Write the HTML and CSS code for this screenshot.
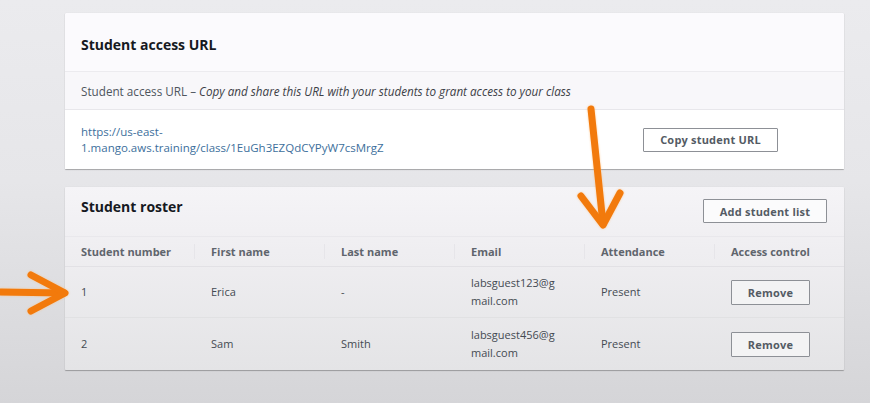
FILE: index.html
```html
<!DOCTYPE html>
<html lang="en">
<head>
<meta charset="utf-8">
<title>Student access</title>
<link rel="stylesheet" href="styles.css">
</head>
<body>
<main class="page">
  <section class="card card-url">
    <header class="card-head">
      <h2 class="card-title">Student access URL</h2>
    </header>
    <p class="desc-row"><span class="desc-label">Student access URL</span> – <em>Copy and share this URL with your students to grant access to your class</em></p>
    <div class="url-row">
      <a class="url-link" href="#">https://us-east-<br>1.mango.aws.training/class/1EuGh3EZQdCYPyW7csMrgZ</a>
      <button class="btn btn-copy">Copy student URL</button>
    </div>
  </section>

  <section class="card card-roster">
    <header class="roster-head">
      <h2 class="card-title roster-title">Student roster</h2>
      <button class="btn btn-add">Add student list</button>
    </header>
    <div class="table">
      <div class="cell th">Student number</div>
      <div class="cell th sep">First name</div>
      <div class="cell th sep">Last name</div>
      <div class="cell th sep">Email</div>
      <div class="cell th sep">Attendance</div>
      <div class="cell th sep">Access control</div>

      <div class="cell td">1</div>
      <div class="cell td">Erica</div>
      <div class="cell td">-</div>
      <div class="cell td email">labsguest123@gmail.com</div>
      <div class="cell td">Present</div>
      <div class="cell td"><button class="btn btn-remove">Remove</button></div>

      <div class="cell td">2</div>
      <div class="cell td">Sam</div>
      <div class="cell td">Smith</div>
      <div class="cell td email">labsguest456@gmail.com</div>
      <div class="cell td">Present</div>
      <div class="cell td"><button class="btn btn-remove">Remove</button></div>
    </div>
  </section>
</main>

<svg class="arrows" width="870" height="403" viewBox="0 0 870 403" aria-hidden="true">
  <g fill="none" stroke="#f27a0c" stroke-width="7" stroke-linecap="round" stroke-linejoin="round">
    <path d="M591 109 L603 224"/>
    <path d="M581 196 L603 225 L620 193"/>
    <path d="M-4 292 L64 293"/>
    <path d="M31 275 L65 293 L31 311"/>
  </g>
</svg>
</body>
</html>
```

FILE: styles.css
```css
* { box-sizing: border-box; }

html, body {
  margin: 0;
  padding: 0;
}

body {
  width: 870px;
  height: 403px;
  overflow: hidden;
  position: relative;
  font-family: "Open Sans", "Noto Sans", sans-serif;
  color: #16191f;
  background: linear-gradient(to bottom, #ebebee 0%, #e6e6e9 45%, #d5d5d8 100%);
}

.page {
  display: flex;
  flex-direction: column;
  gap: 18px;
  padding: 13px 26px 0 65px;
}

.card {
  border-radius: 1px;
  box-shadow: 0 1px 1px rgba(0, 0, 0, 0.28), 0 0 1px rgba(0, 0, 0, 0.12);
}

.card-title {
  margin: 0;
  font-size: 14px;
  line-height: 20px;
  font-weight: 700;
  color: #16191f;
}

/* --- URL card --- */
.card-url {
  background: #fbfafd;
}

.card-head {
  height: 58px;
  padding: 22px 16px 0;
}

.desc-row {
  margin: 0;
  height: 39px;
  padding: 11px 16px 0;
  font-size: 11.7px;
  line-height: 16px;
  white-space: nowrap;
  color: #545b64;
  background: #f8f7fa;
  border-top: 1px solid #ecebef;
  border-bottom: 1px solid #e8e7eb;
}

.desc-label {
  color: #4f555d;
}

.desc-row em {
  font-style: italic;
  color: #3c4046;
}

.url-row {
  height: 59px;
  display: flex;
  align-items: center;
  justify-content: space-between;
  padding: 0 66px 0 16px;
  background: #ffffff;
}

.url-link {
  font-size: 11.5px;
  line-height: 16px;
  color: #3d6f9c;
  text-decoration: none;
}

.btn {
  font-family: inherit;
  font-size: 11px;
  font-weight: 700;
  color: #545b64;
  background: #ffffff;
  border: 1px solid #8d9096;
  border-radius: 1px;
  padding: 0;
  letter-spacing: 0.2px;
}

.btn-copy {
  width: 135px;
  height: 24px;
}

/* --- Roster card --- */
.card-roster {
  background: linear-gradient(to bottom, #f5f4f7 0%, #efeef1 35%, #e4e4e6 100%);
}

.roster-head {
  height: 49px;
  display: flex;
  justify-content: space-between;
  align-items: flex-start;
  padding: 12px 17px 0 16px;
}

.roster-title {
  margin-top: -2px;
}

.btn-add {
  width: 124px;
  height: 24px;
  background: #fbfbfc;
}

.table {
  display: grid;
  grid-template-columns: 129px 130px 130px 130px 130px 130px;
}

.cell {
  display: flex;
  align-items: center;
  padding-left: 16px;
  font-size: 11px;
  color: #444a52;
}

.th {
  height: 31px;
  font-weight: 700;
  color: #5f656d;
  border-top: 1px solid #e9e8ec;
  border-bottom: 1px solid #e2e1e5;
  position: relative;
}

.th.sep {
  padding-left: 17px;
}

.th.sep::before {
  content: "";
  position: absolute;
  left: 0;
  top: 7px;
  bottom: 7px;
  border-left: 1px solid #e6e5e9;
}

.td {
  height: 51px;
  padding-left: 17px;
  border-bottom: 1px solid #e1e1e3;
  line-height: 18px;
}

.td:nth-child(6n+1) {
  padding-left: 16px;
}

.table .td:nth-last-child(-n+6) {
  border-bottom: none;
  height: 52px;
}

.email {
  padding-right: 22px;
  word-break: break-all;
}

.btn-remove {
  width: 79px;
  height: 25px;
  background: #f3f3f4;
}

/* --- annotation arrows --- */
.arrows {
  position: absolute;
  left: 0;
  top: 0;
  pointer-events: none;
  filter: drop-shadow(0 0 1px rgba(255, 190, 120, 0.7));
}
```
